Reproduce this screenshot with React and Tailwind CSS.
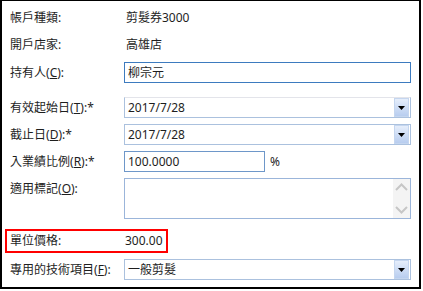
import React from 'react';

const font = { fontFamily: '"Noto Sans", "Noto Sans CJK TC", sans-serif' };

function Label({ text, hotkey, star }) {
  return (
    <div className="w-[114px] shrink-0 whitespace-nowrap">
      {text}
      {hotkey && (
        <>
          (<span className="underline">{hotkey}</span>)
        </>
      )}
      :{star && '*'}
    </div>
  );
}

function ArrowButton() {
  return (
    <div className="flex h-[19px] w-[15px] items-center justify-center border border-[#c5d6ef] bg-gradient-to-b from-[#e6eefb] to-[#b8cdef]">
      <svg width="7" height="4" viewBox="0 0 7 4">
        <path d="M0 0h7L3.5 4z" fill="#000" />
      </svg>
    </div>
  );
}

function Combo({ value, topColor = 'border-t-[#abc1de]' }) {
  return (
    <div className={`flex h-[21px] flex-1 items-center border border-[#abc1de] ${topColor} bg-white pl-[3px] pr-px`}>
      <span className="flex-1">{value}</span>
      <ArrowButton />
    </div>
  );
}

export default function App() {
  return (
    <div className="h-[291px] w-[423px] bg-white text-[12px] leading-none text-[#1e1e1e]" style={font}>
      <div className="flex h-[289px] w-[421px] flex-col border-2 border-t border-black pr-[8px] pt-[6px]">
        <div className="flex h-[21px] items-center pl-[8px]">
          <Label text="帳戶種類" />
          <span className="pl-[2px]">剪髮券3000</span>
        </div>

        <div className="mt-[6px] flex h-[21px] items-center pl-[8px]">
          <Label text="開戶店家" />
          <span className="pl-[2px]">高雄店</span>
        </div>

        <div className="mt-[7px] flex h-[21px] items-center pl-[8px]">
          <Label text="持有人" hotkey="C" />
          <div className="flex h-[21px] flex-1 items-center border border-[#3d7bbf] pl-[3px]">柳宗元</div>
        </div>

        <div className="mt-[14px] flex h-[21px] items-center pl-[8px]">
          <Label text="有效起始日" hotkey="T" star />
          <Combo value="2017/7/28" topColor="border-t-[#e3e4ea]" />
        </div>

        <div className="mt-[6px] flex h-[21px] items-center pl-[8px]">
          <Label text="截止日" hotkey="D" star />
          <Combo value="2017/7/28" />
        </div>

        <div className="mt-[6px] flex h-[21px] items-center pl-[8px]">
          <Label text="入業績比例" hotkey="R" star />
          <div className="flex h-[21px] w-[141px] items-center border border-[#6e97c9] pl-[3px]">100.0000</div>
          <span className="pl-[5px]">%</span>
        </div>

        <div className="mt-[6px] flex h-[41px] items-start pl-[8px]">
          <div className="pt-[5px]">
            <Label text="適用標記" hotkey="O" />
          </div>
          <div className="flex h-[41px] flex-1 justify-end border border-[#9bb5da]">
            <div className="flex w-[17px] flex-col items-center justify-between bg-[#f4f4f4] pb-[4px] pt-[4px]">
              <svg width="13" height="8" viewBox="0 0 13 8">
                <path d="M1 7L6.5 1.5L12 7" fill="none" stroke="#c6c6c6" strokeWidth="2" />
              </svg>
              <svg width="13" height="8" viewBox="0 0 13 8">
                <path d="M1 1L6.5 6.5L12 1" fill="none" stroke="#c6c6c6" strokeWidth="2" />
              </svg>
            </div>
          </div>
        </div>

        <div className="ml-[3px] mt-[10px] flex h-[24px] w-[163px] items-center border-2 border-[#f00] pl-[3px]">
          <Label text="單位價格" />
          <span className="pl-px">300.00</span>
        </div>

        <div className="mt-[6px] flex h-[21px] items-center pl-[8px]">
          <Label text="專用的技術項目" hotkey="F" />
          <Combo value="一般剪髮" />
        </div>
      </div>
    </div>
  );
}
